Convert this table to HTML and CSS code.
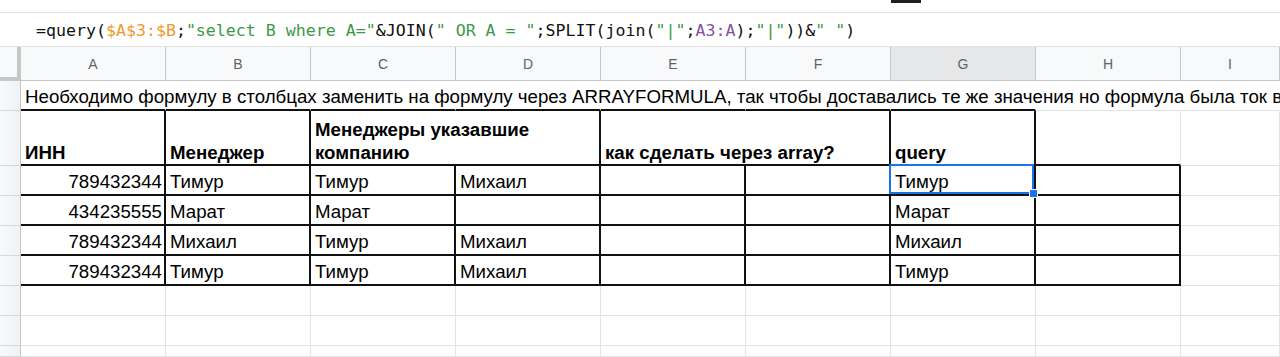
FILE: index.html
```html
<!DOCTYPE html>
<html lang="ru">
<head>
<meta charset="utf-8">
<title>Sheet</title>
<link rel="stylesheet" href="styles.css">
</head>
<body>
<div class="topbar"><span class="tab-mark"></span></div>
<div class="formula-bar"><code class="formula">=query(<span class="r1">$A$3:$B</span>;<span class="str">"select B where A="</span>&amp;JOIN(<span class="str">" OR A = "</span>;SPLIT(join(<span class="str">"|"</span>;<span class="r2">A3:A</span>);<span class="str">"|"</span>))&amp;<span class="str">" "</span>)</code></div>
<div class="sheet">
  <div class="corner"></div>
  <div class="ch">A</div><div class="ch">B</div><div class="ch">C</div><div class="ch">D</div><div class="ch">E</div><div class="ch">F</div><div class="ch ch-sel">G</div><div class="ch">H</div><div class="ch">I</div>

  <div class="rh"></div>
  <div class="c nr bb overflow">Необходимо формулу в столбцах заменить на формулу через ARRAYFORMULA, так чтобы доставались те же значения но формула была ток в</div>
  <div class="c nr bb"></div><div class="c nr bb"></div><div class="c nr bb"></div><div class="c nr bb"></div><div class="c nr bb"></div><div class="c nr bb"></div>
  <div class="c nr"></div><div class="c nr"></div>

  <div class="rh"></div>
  <div class="c b hd">ИНН</div>
  <div class="c b hd">Менеджер</div>
  <div class="c b hd span2">Менеджеры указавшие компанию</div>
  <div class="c b hd span2">как сделать через array?</div>
  <div class="c b hd">query</div>
  <div class="c bb"></div>
  <div class="c"></div>

  <div class="rh"></div>
  <div class="c b num">789432344</div><div class="c b">Тимур</div><div class="c b">Тимур</div><div class="c b">Михаил</div><div class="c b"></div><div class="c b"></div><div class="c b sel">Тимур</div><div class="c b"></div><div class="c"></div>

  <div class="rh"></div>
  <div class="c b num">434235555</div><div class="c b">Марат</div><div class="c b">Марат</div><div class="c b"></div><div class="c b"></div><div class="c b"></div><div class="c b">Марат</div><div class="c b"></div><div class="c"></div>

  <div class="rh"></div>
  <div class="c b num">789432344</div><div class="c b">Михаил</div><div class="c b">Тимур</div><div class="c b">Михаил</div><div class="c b"></div><div class="c b"></div><div class="c b">Михаил</div><div class="c b"></div><div class="c"></div>

  <div class="rh"></div>
  <div class="c b num">789432344</div><div class="c b">Тимур</div><div class="c b">Тимур</div><div class="c b">Михаил</div><div class="c b"></div><div class="c b"></div><div class="c b">Тимур</div><div class="c b"></div><div class="c"></div>

  <div class="rh"></div>
  <div class="c"></div><div class="c"></div><div class="c"></div><div class="c"></div><div class="c"></div><div class="c"></div><div class="c"></div><div class="c"></div><div class="c"></div>

  <div class="rh"></div>
  <div class="c"></div><div class="c"></div><div class="c"></div><div class="c"></div><div class="c"></div><div class="c"></div><div class="c"></div><div class="c"></div><div class="c"></div>

  <div class="rh"></div>
  <div class="c"></div><div class="c"></div><div class="c"></div><div class="c"></div><div class="c"></div><div class="c"></div><div class="c"></div><div class="c"></div><div class="c"></div>
</div>
</body>
</html>
```
FILE: styles.css
```css
* { box-sizing: border-box; }
html, body {
  margin: 0;
  padding: 0;
  background: #fff;
  overflow: hidden;
  height: 357px;
}
body {
  font-family: "Liberation Sans", Arial, sans-serif;
  color: #000;
}
.topbar {
  height: 13px;
  border-bottom: 1px solid #e1e1e1;
  display: flex;
  padding-left: 891px;
}
.tab-mark {
  width: 30px;
  height: 3px;
  background: #1f1f1f;
}
.formula-bar {
  height: 34px;
  border-bottom: 1px solid #e1e1e1;
  display: flex;
  align-items: center;
  padding-left: 36px;
}
.formula {
  font-family: "DejaVu Sans Mono", "Liberation Mono", monospace;
  font-size: 16.6px;
  color: #111;
  white-space: pre;
  padding-top: 1px;
}
.formula .r1 { color: #ef9b2c; }
.formula .r2 { color: #8b4fa3; }
.formula .str { color: #3d9a47; }

.sheet {
  display: grid;
  grid-template-columns: 21px repeat(8, 145px) 1fr;
  grid-template-rows: 34px 30px 55px repeat(6, 30px) 11px;
  background: #fff;
}
.corner {
  background: #f8f9fa;
  border-right: 4px solid #c7c7c7;
  border-bottom: 4px solid #c7c7c7;
}
.ch {
  background: #f8f9fa;
  border-right: 1px solid #c4c7c5;
  border-bottom: 1px solid #c4c7c5;
  color: #5f6368;
  font-size: 14px;
  display: flex;
  align-items: center;
  justify-content: center;
}
.ch-sel { background: #e6e7e9; }
.rh {
  background: linear-gradient(to right, #f8f9fa 0, #f1f2f3 100%);
  border-right: 1px solid #c4c7c5;
  border-bottom: 1px solid #d6d8da;
}
.c {
  border-right: 1px solid #e2e3e3;
  border-bottom: 1px solid #e2e3e3;
  font-size: 18.7px;
  line-height: 20px;
  padding: 0 3px 2px 4px;
  display: flex;
  align-items: flex-end;
  white-space: nowrap;
  overflow: hidden;
  min-width: 0;
}
.c.nr { border-right-color: transparent; }
.c.bb { border-bottom: 2px solid #111; }
.c.b { border-right: 2px solid #111; border-bottom: 2px solid #111; }
.c.overflow { overflow: visible; }
.c.num { justify-content: flex-end; padding-right: 2px; }
.c.hd {
  font-weight: bold;
  white-space: normal;
  line-height: 23px;
  padding-bottom: 0;
}
.span2 { grid-column: span 2; }
.sel {
  position: relative;
  overflow: visible;
}
.sel::before {
  content: "";
  position: absolute;
  top: -2px;
  left: -2px;
  right: 0;
  bottom: 0;
  border: 2px solid #1a73e8;
}
.sel::after {
  content: "";
  position: absolute;
  right: -4px;
  bottom: -4px;
  width: 7px;
  height: 7px;
  background: #1a73e8;
  border: 1px solid #fff;
}
```
